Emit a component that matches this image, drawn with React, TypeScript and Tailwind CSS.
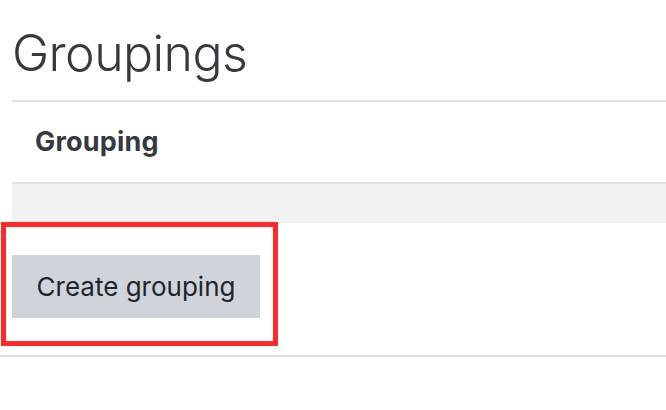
export default function App() {
  return (
    <div className="relative w-[666px] h-[410px] bg-white overflow-hidden text-[#343a40]" style={{ fontFamily: 'Inter, "Liberation Sans", sans-serif' }}>
      <div className="pl-3 pt-[20px]">
        <h2 className="text-[50px] leading-[66px] font-light tracking-[-0.6px] pb-[14px] border-b-2 border-[#dee2e6]">Groupings</h2>
        <div className="flex items-center h-[82px] pl-[23px] border-b-2 border-[#dee2e6]">
          <span className="text-[27px] font-bold tracking-[0.2px]">Grouping</span>
        </div>
        <div className="h-[39px] bg-[#f2f2f2]"></div>
        <div className="pt-[32px] pb-[37px]">
          <button className="w-[248px] h-[63px] bg-[#ced4da] text-[26px] text-[#212529]">Create grouping</button>
        </div>
      </div>
      <div className="border-b-2 border-[#dedede]"></div>
      <div className="absolute left-[1px] top-[222px] w-[277px] h-[124px] border-[5px] border-[#ff2a27]"></div>
    </div>
  );
}
